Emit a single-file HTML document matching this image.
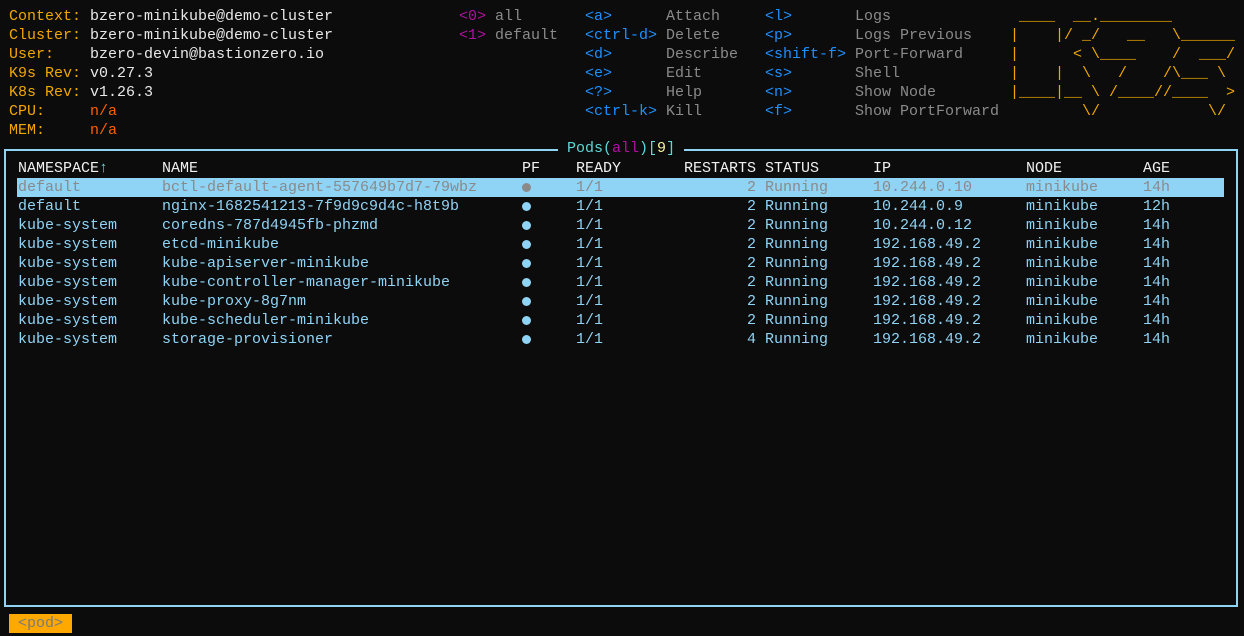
<!DOCTYPE html>
<html><head><meta charset="utf-8"><style>
html,body{margin:0;padding:0;background:#0c0c0c;width:1244px;height:636px;overflow:hidden}
pre{position:absolute;margin:0;font-family:"Liberation Mono","DejaVu Sans Mono",monospace;font-size:15px;line-height:19px;white-space:pre}
.y{color:#f0a800}.w{color:#e8e8e8}.o{color:#ff5f00}.m{color:#b0109f}.g{color:#8a8a8a}.b{color:#1e90ff}.c{color:#5fd7d7}.t{color:#8fd3f5}.h{color:#f0f0f0}
</style></head><body>
<pre class="y" style="left:9px;top:7px">Context:
Cluster:
User:
K9s Rev:
K8s Rev:
CPU:
MEM:</pre>
<pre class="w" style="left:90px;top:7px">bzero-minikube@demo-cluster
bzero-minikube@demo-cluster
bzero-devin@bastionzero.io
v0.27.3
v1.26.3
<span class="o">n/a</span>
<span class="o">n/a</span></pre>
<pre class="m" style="left:459px;top:7px">&lt;0&gt;
&lt;1&gt;</pre>
<pre class="g" style="left:495px;top:7px">all
default</pre>
<pre class="b" style="left:585px;top:7px">&lt;a&gt;
&lt;ctrl-d&gt;
&lt;d&gt;
&lt;e&gt;
&lt;?&gt;
&lt;ctrl-k&gt;</pre>
<pre class="g" style="left:666px;top:7px">Attach
Delete
Describe
Edit
Help
Kill</pre>
<pre class="b" style="left:765px;top:7px">&lt;l&gt;
&lt;p&gt;
&lt;shift-f&gt;
&lt;s&gt;
&lt;n&gt;
&lt;f&gt;</pre>
<pre class="g" style="left:855px;top:7px">Logs
Logs Previous
Port-Forward
Shell
Show Node
Show PortForward</pre>
<pre class="y" style="left:1010px;top:7px"> ____  __.________
|    |/ _/   __   \______
|      &lt; \____    /  ___/
|    |  \   /    /\___ \
|____|__ \ /____//____  &gt;
        \/            \/</pre>
<div style="position:absolute;left:4px;top:149px;width:1230px;height:454px;border:2px solid #8fd3f5"></div>
<pre class="c" style="left:558px;top:139px;background:#0c0c0c;padding:0 9px">Pods(<span class="m">all</span>)[<span style="color:#f5f5a0">9</span>]</pre>
<div style="position:absolute;left:17px;top:178px;width:1207px;height:19px;background:#8fd3f5"></div>
<pre class="h" style="left:18px;top:159px">NAMESPACE<span class="c">↑</span></pre>
<pre class="t" style="left:18px;top:178px"><span class="g">default</span>
default
kube-system
kube-system
kube-system
kube-system
kube-system
kube-system
kube-system</pre>
<pre class="h" style="left:162px;top:159px">NAME</pre>
<pre class="t" style="left:162px;top:178px"><span class="g">bctl-default-agent-557649b7d7-79wbz</span>
nginx-1682541213-7f9d9c9d4c-h8t9b
coredns-787d4945fb-phzmd
etcd-minikube
kube-apiserver-minikube
kube-controller-manager-minikube
kube-proxy-8g7nm
kube-scheduler-minikube
storage-provisioner</pre>
<pre class="h" style="left:522px;top:159px">PF</pre>
<pre class="h" style="left:576px;top:159px">READY</pre>
<pre class="t" style="left:576px;top:178px"><span class="g">1/1</span>
1/1
1/1
1/1
1/1
1/1
1/1
1/1
1/1</pre>
<pre class="h" style="left:684px;top:159px">RESTARTS</pre>
<pre class="t" style="left:747px;top:178px"><span class="g">2</span>
2
2
2
2
2
2
2
4</pre>
<pre class="h" style="left:765px;top:159px">STATUS</pre>
<pre class="t" style="left:765px;top:178px"><span class="g">Running</span>
Running
Running
Running
Running
Running
Running
Running
Running</pre>
<pre class="h" style="left:873px;top:159px">IP</pre>
<pre class="t" style="left:873px;top:178px"><span class="g">10.244.0.10</span>
10.244.0.9
10.244.0.12
192.168.49.2
192.168.49.2
192.168.49.2
192.168.49.2
192.168.49.2
192.168.49.2</pre>
<pre class="h" style="left:1026px;top:159px">NODE</pre>
<pre class="t" style="left:1026px;top:178px"><span class="g">minikube</span>
minikube
minikube
minikube
minikube
minikube
minikube
minikube
minikube</pre>
<pre class="h" style="left:1143px;top:159px">AGE</pre>
<pre class="t" style="left:1143px;top:178px"><span class="g">14h</span>
12h
14h
14h
14h
14h
14h
14h
14h</pre>
<div style="position:absolute;left:522px;top:183px;width:9px;height:9px;border-radius:50%;background:#8a8a8a"></div>
<div style="position:absolute;left:522px;top:202px;width:9px;height:9px;border-radius:50%;background:#8fd3f5"></div>
<div style="position:absolute;left:522px;top:221px;width:9px;height:9px;border-radius:50%;background:#8fd3f5"></div>
<div style="position:absolute;left:522px;top:240px;width:9px;height:9px;border-radius:50%;background:#8fd3f5"></div>
<div style="position:absolute;left:522px;top:259px;width:9px;height:9px;border-radius:50%;background:#8fd3f5"></div>
<div style="position:absolute;left:522px;top:278px;width:9px;height:9px;border-radius:50%;background:#8fd3f5"></div>
<div style="position:absolute;left:522px;top:297px;width:9px;height:9px;border-radius:50%;background:#8fd3f5"></div>
<div style="position:absolute;left:522px;top:316px;width:9px;height:9px;border-radius:50%;background:#8fd3f5"></div>
<div style="position:absolute;left:522px;top:335px;width:9px;height:9px;border-radius:50%;background:#8fd3f5"></div>
<div style="position:absolute;left:9px;top:614px;width:63px;height:19px;background:#ffa800"></div>
<pre style="left:18px;top:614px;color:#7a7a7a">&lt;pod&gt;</pre>
</body></html>
